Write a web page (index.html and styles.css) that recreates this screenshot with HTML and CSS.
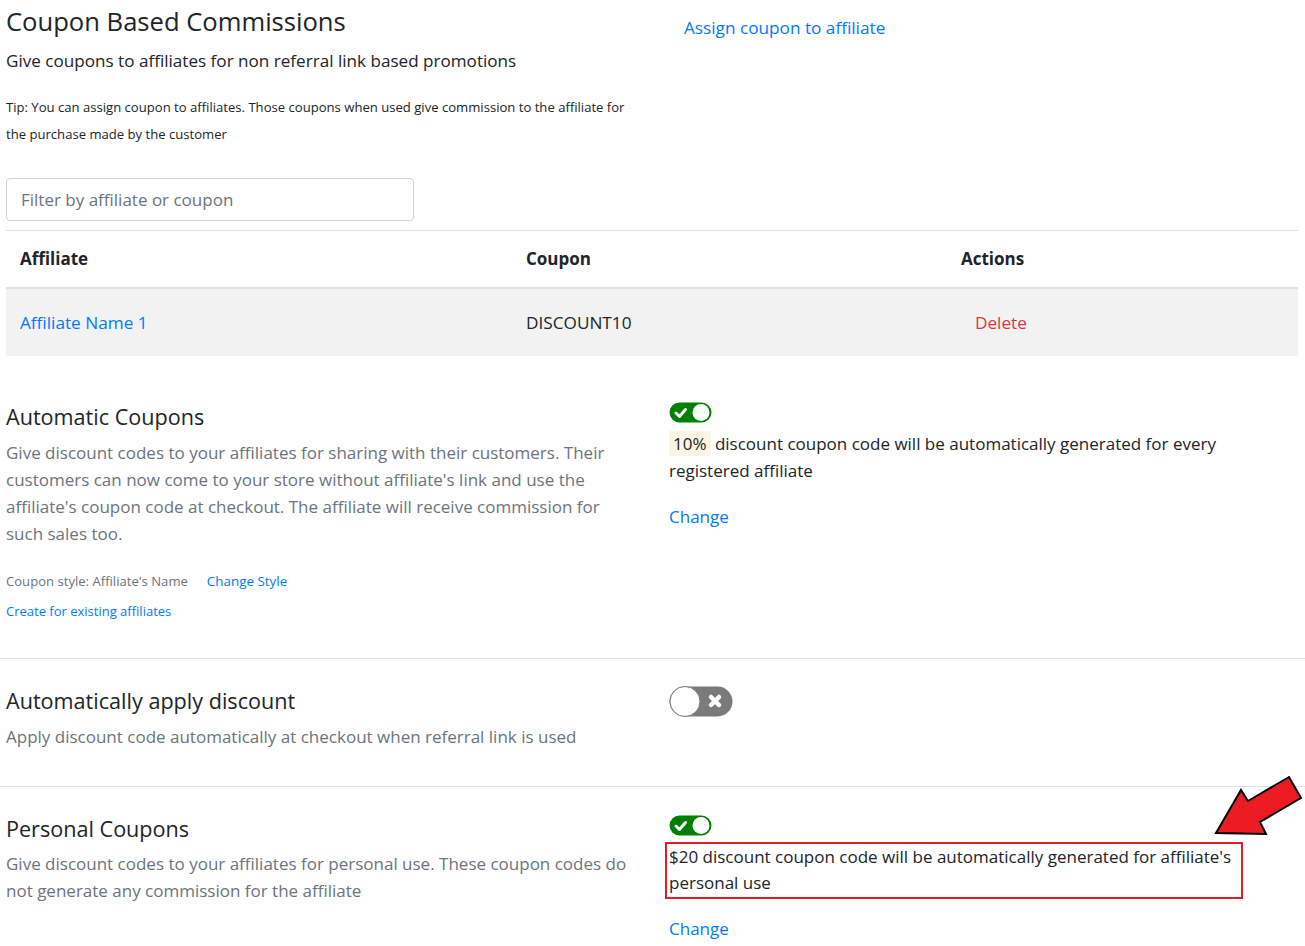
FILE: index.html
```html
<!DOCTYPE html>
<html lang="en">
<head>
<meta charset="utf-8">
<title>Coupon Based Commissions</title>
<link rel="stylesheet" href="styles.css">
</head>
<body>
<div class="wrap">
  <div class="intro">
    <div class="intro-left">
      <h1 class="title">Coupon Based Commissions</h1>
      <p class="subtitle">Give coupons to affiliates for non referral link based promotions</p>
      <p class="tip">Tip: You can assign coupon to affiliates. Those coupons when used give commission to the affiliate for the purchase made by the customer</p>
    </div>
    <div class="intro-right">
      <a class="link assign" href="#">Assign coupon to affiliate</a>
    </div>
  </div>

  <div class="filter">
    <input class="filter-input" type="text" placeholder="Filter by affiliate or coupon">
  </div>

  <table class="coupons">
    <colgroup><col class="c1"><col class="c2"><col class="c3"></colgroup>
    <thead>
      <tr><th>Affiliate</th><th>Coupon</th><th>Actions</th></tr>
    </thead>
    <tbody>
      <tr>
        <td><a class="link" href="#">Affiliate Name 1</a></td>
        <td>DISCOUNT10</td>
        <td><a class="delete" href="#">Delete</a></td>
      </tr>
    </tbody>
  </table>
</div>

<section class="setting first">
  <div class="set-left">
    <h2 class="set-title">Automatic Coupons</h2>
    <p class="set-desc">Give discount codes to your affiliates for sharing with their customers. Their customers can now come to your store without affiliate's link and use the affiliate's coupon code at checkout. The affiliate will receive commission for such sales too.</p>
    <div class="style-row">
      <span class="style-label">Coupon style: Affiliate's Name</span>
      <a class="link small-link" href="#">Change Style</a>
    </div>
    <div class="create-row">
      <a class="link tiny-link" href="#">Create for existing affiliates</a>
    </div>
  </div>
  <div class="set-right">
    <div class="toggle-line">
      <svg class="toggle-on" width="43" height="21" viewBox="0 0 43 21">
        <rect x="0.5" y="0.5" width="42" height="20" rx="10" fill="#008000"/>
        <circle cx="32" cy="10.5" r="8.5" fill="#fff"/>
        <path d="M7 11 L10.5 14.5 L16.5 7.5" fill="none" stroke="#fff" stroke-width="3" stroke-linecap="round" stroke-linejoin="round"/>
      </svg>
    </div>
    <p class="set-text"><span class="chip">10%</span> discount coupon code will be automatically generated for every registered affiliate</p>
    <a class="link change" href="#">Change</a>
  </div>
</section>

<section class="setting second">
  <div class="set-left">
    <h2 class="set-title">Automatically apply discount</h2>
    <p class="set-desc">Apply discount code automatically at checkout when referral link is used</p>
  </div>
  <div class="set-right">
    <svg class="toggle-off" width="64" height="31" viewBox="0 0 64 31">
      <rect x="0.5" y="0.5" width="63" height="30" rx="15" fill="#7a7a7a"/>
      <circle cx="16" cy="15.5" r="15" fill="#fff" stroke="#7a7a7a"/>
      <path d="M42 11 L50 19 M50 11 L42 19" stroke="#fff" stroke-width="4.5" stroke-linecap="round"/>
    </svg>
  </div>
</section>

<section class="setting third">
  <div class="set-left">
    <h2 class="set-title">Personal Coupons</h2>
    <p class="set-desc">Give discount codes to your affiliates for personal use. These coupon codes do not generate any commission for the affiliate</p>
  </div>
  <div class="set-right">
    <div class="toggle-line">
      <svg class="toggle-on" width="43" height="21" viewBox="0 0 43 21">
        <rect x="0.5" y="0.5" width="42" height="20" rx="10" fill="#008000"/>
        <circle cx="32" cy="10.5" r="8.5" fill="#fff"/>
        <path d="M7 11 L10.5 14.5 L16.5 7.5" fill="none" stroke="#fff" stroke-width="3" stroke-linecap="round" stroke-linejoin="round"/>
      </svg>
    </div>
    <p class="set-text highlight">$20 discount coupon code will be automatically generated for affiliate's personal use</p>
    <a class="link change" href="#">Change</a>
  </div>
</section>

<svg class="arrow" width="105" height="80" viewBox="1200 770 105 80">
  <polygon points="1216,833 1241,790 1248,801 1289,777 1301,798 1260,822 1266,834" fill="#ed1c24" stroke="#000" stroke-width="2" stroke-linejoin="miter"/>
</svg>
</body>
</html>
```
FILE: styles.css
```css
* { box-sizing: border-box; }

body {
  margin: 0;
  position: relative;
  font-family: "Open Sans", "Noto Sans", sans-serif;
  color: #212529;
  background: #fff;
  font-size: 17px;
  line-height: 27px;
}

p, h1, h2 { margin: 0; }

a { text-decoration: none; }

.link { color: #007bff; }

.wrap {
  padding: 0 7px 0 6px;
}

.intro {
  display: grid;
  grid-template-columns: 633px 1fr;
  column-gap: 30px;
}

.title {
  font-size: 25.6px;
  font-weight: 400;
  line-height: 30px;
  margin-top: 7px;
}

.subtitle {
  margin-top: 10px;
  font-size: 17.1px;
  line-height: 27px;
}

.tip {
  margin-top: 20px;
  font-size: 13.1px;
  line-height: 27px;
}

.intro-right {
  padding: 14px 0 0 15px;
}

.assign {
  font-size: 17.2px;
  line-height: 27px;
}

.filter {
  margin-top: 30px;
}

.filter-input {
  display: block;
  width: 408px;
  height: 43px;
  border: 1px solid #ced4da;
  border-radius: 4px;
  padding: 0 14px;
  font-family: inherit;
  font-size: 17px;
  color: #495057;
}

.filter-input::placeholder { color: #6c757d; }

.coupons {
  margin-top: 9px;
  width: 100%;
  border-collapse: collapse;
  table-layout: fixed;
}

.c1 { width: 506px; }
.c2 { width: 435px; }

.coupons th {
  text-align: left;
  font-weight: 700;
  font-size: 17px;
  height: 57px;
  padding: 0 14px;
  border-top: 1px solid #dee2e6;
  border-bottom: 2px solid #dee2e6;
}

.coupons td {
  background: #f2f2f2;
  height: 68px;
  padding: 0 14px;
  font-size: 17.2px;
}

.delete {
  color: #dc3545;
  padding-left: 14px;
}

.setting {
  display: grid;
  grid-template-columns: 633px 1fr;
  column-gap: 30px;
  padding: 28px 7px 34px 6px;
  border-top: 1px solid #dee2e6;
}

.setting.first {
  border-top: none;
  margin-top: 18px;
  padding-bottom: 33px;
}

.setting.second {
  padding-top: 27px;
  padding-bottom: 36px;
}

.setting.third { padding-top: 27px; }

.set-title {
  font-size: 21.6px;
  font-weight: 400;
  line-height: 30px;
}

.set-desc {
  margin-top: 7px;
  color: #6c757d;
  font-size: 17px;
  line-height: 27px;
}

.third .set-desc { margin-top: 6px; }

.style-row {
  margin-top: 21px;
  display: flex;
  align-items: baseline;
  gap: 19px;
  line-height: 27px;
}

.style-label {
  color: #6c757d;
  font-size: 13.1px;
}

.small-link { font-size: 13.4px; }

.create-row {
  margin-top: 1px;
  line-height: 27px;
}

.tiny-link { font-size: 13px; }

.toggle-line {
  height: 21px;
}

.third .toggle-line { margin-top: 1px; }

.toggle-on, .toggle-off { display: block; }

.third .toggle-on { margin-top: 1px; }

.set-text {
  margin-top: 7px;
  font-size: 17px;
  line-height: 27px;
}

.chip {
  display: inline-block;
  background: #fcf5e3;
  padding: 0 4px;
  line-height: 25px;
}

.highlight {
  margin-top: 6px;
  margin-left: -4px;
  width: 578px;
  border: 2px solid #e31b23;
  padding: 0 2px;
  line-height: 26.5px;
}

.change {
  display: inline-block;
  margin-top: 19px;
  font-size: 17px;
  line-height: 27px;
}

.third .change { margin-top: 16px; }

.arrow {
  position: absolute;
  left: 1200px;
  top: 770px;
}
```
